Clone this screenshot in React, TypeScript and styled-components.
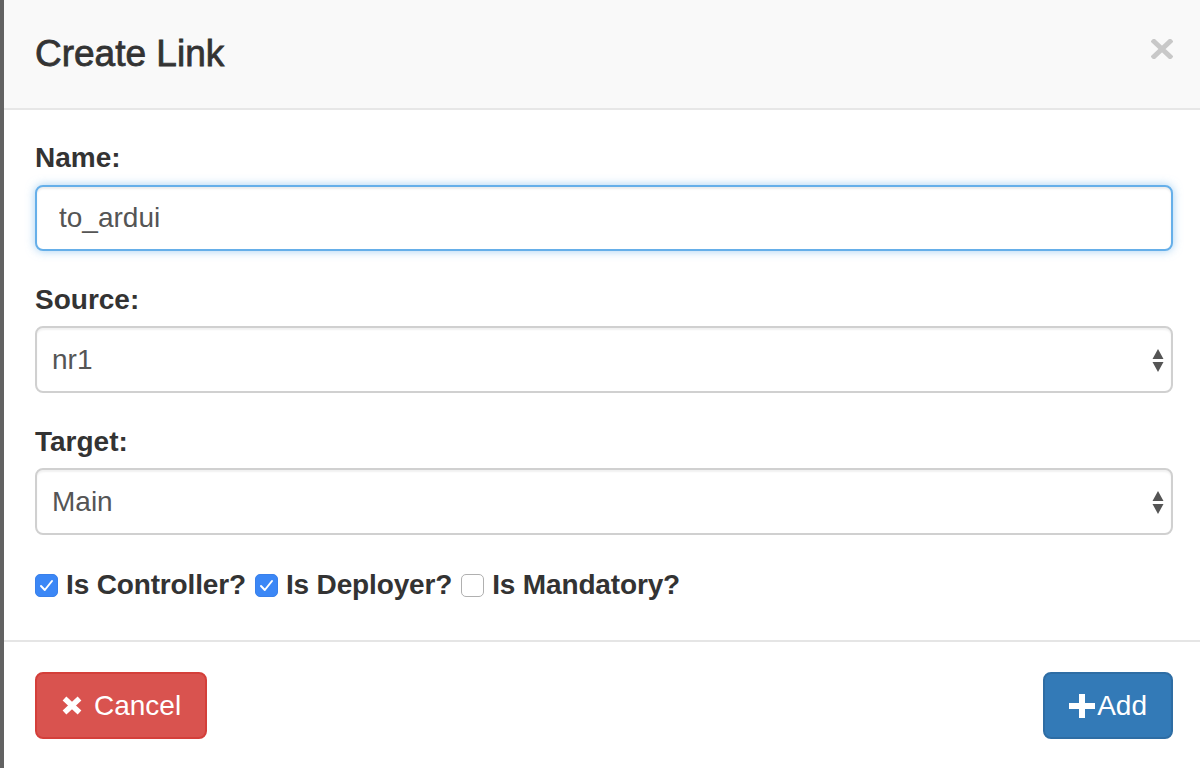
import React from "react";
import styled, { createGlobalStyle } from "styled-components";

const Global = createGlobalStyle`
  html, body { margin: 0; padding: 0; overflow: hidden; }
  body {
    background: #626262;
    font-family: "Liberation Sans", Arial, Helvetica, sans-serif;
    color: #333;
  }
  * { box-sizing: border-box; }
`;

const Modal = styled.div`
  margin-left: 4px;
  width: 1200px;
  height: 768px;
  background: #fff;
  display: flex;
  flex-direction: column;
`;

const Header = styled.div`
  height: 110px;
  padding: 28px 31px 0 31px;
  background: #f9f9f9;
  border-bottom: 2px solid #e7e7e7;
  display: flex;
  justify-content: space-between;
  align-items: flex-start;
`;

const Title = styled.h4`
  margin: 0;
  font-size: 37px;
  line-height: 51px;
  font-weight: 400;
  color: #333;
  -webkit-text-stroke: 0.8px #333;
`;

const CloseButton = styled.button`
  border: 0;
  background: transparent;
  padding: 0;
  margin-top: 11px;
  width: 22px;
  height: 20px;
  display: flex;
  cursor: pointer;
`;

const Body = styled.div`
  padding: 28px 31px 35px 31px;
  border-bottom: 2px solid #e5e5e5;
`;

const FormGroup = styled.div<{ $mb?: number }>`
  margin-bottom: ${(p) => (p.$mb ?? 29)}px;
  display: flex;
  flex-direction: column;
`;

const Label = styled.label<{ $mb?: number }>`
  display: block;
  font-size: 28px;
  line-height: 40px;
  font-weight: 700;
  color: #333;
  margin-bottom: ${(p) => (p.$mb ?? 6)}px;
`;

const TextInput = styled.input`
  height: 66px;
  width: 100%;
  padding: 0 22px;
  font-family: inherit;
  font-size: 28px;
  color: #555;
  background: #fff;
  border: 2px solid #66afe9;
  border-radius: 8px;
  outline: none;
  box-shadow: inset 0 2px 2px rgba(0, 0, 0, 0.075), 0 0 10px rgba(102, 175, 233, 0.6);
`;

const SelectWrap = styled.div`
  position: relative;
  width: 100%;
`;

const Select = styled.select`
  appearance: none;
  -webkit-appearance: none;
  height: 67px;
  width: 100%;
  padding: 0 40px 0 15px;
  font-family: inherit;
  font-size: 28px;
  color: #555;
  background: #fff;
  border: 2px solid #d0d0d0;
  border-radius: 8px;
  outline: none;
  box-shadow: inset 0 2px 2px rgba(0, 0, 0, 0.06);
`;

const Arrows = styled.svg`
  position: absolute;
  right: 9px;
  top: 50%;
  margin-top: -12px;
  width: 12px;
  height: 24px;
  pointer-events: none;
`;

const CheckRow = styled.div`
  display: flex;
  align-items: center;
  height: 40px;
  gap: 9px;
`;

const CheckLabel = styled.label`
  display: flex;
  align-items: center;
  gap: 8px;
  font-size: 28px;
  line-height: 40px;
  font-weight: 700;
  letter-spacing: -0.15px;
  color: #333;
`;

const Box = styled.span<{ $checked: boolean }>`
  width: 23px;
  height: 23px;
  border-radius: 5px;
  display: inline-flex;
  align-items: center;
  justify-content: center;
  background: ${(p) => (p.$checked ? "#3b87f6" : "#fff")};
  border: ${(p) => (p.$checked ? "1px solid #3a80ea" : "1.5px solid #b0b0b0")};
`;

const Footer = styled.div`
  padding: 30px 31px 0 31px;
  display: flex;
  justify-content: space-between;
  align-items: flex-start;
`;

const Button = styled.button<{ $variant: "danger" | "primary" }>`
  height: 67px;
  padding: 0 24px;
  border-radius: 8px;
  border: 2px solid ${(p) => (p.$variant === "danger" ? "#d43f3a" : "#2e6da4")};
  background: ${(p) => (p.$variant === "danger" ? "#d9534f" : "#337ab7")};
  color: #fff;
  font-family: inherit;
  font-size: 28px;
  display: inline-flex;
  align-items: center;
  gap: ${(p) => (p.$variant === "danger" ? 11 : 2)}px;
  cursor: pointer;
`;

const Check = () => (
  <svg width="15" height="13" viewBox="0 0 15 13">
    <path d="M2 7 L5.8 11 L13 2" fill="none" stroke="#fff" strokeWidth="2" strokeLinecap="round" strokeLinejoin="round" />
  </svg>
);

const CheckItem = ({ checked, text }: { checked: boolean; text: string }) => (
  <CheckLabel>
    <Box $checked={checked}>{checked && <Check />}</Box>
    {text}
  </CheckLabel>
);

const SelectArrows = () => (
  <Arrows viewBox="0 0 12 24">
    <path d="M0.5 11 L6 1 L11.5 11 Z M0.5 14 L11.5 14 L6 24 Z" fill="#555" />
  </Arrows>
);

export default function App() {
  return (
    <>
      <Global />
      <Modal>
        <Header>
          <Title>Create Link</Title>
          <CloseButton aria-label="Close">
            <svg width="22" height="20" viewBox="0 0 22 20">
              <path d="M3 2.5 L19 17.5 M19 2.5 L3 17.5" stroke="#c8c8c8" strokeWidth="5" strokeLinecap="square" />
            </svg>
          </CloseButton>
        </Header>
        <Body>
          <FormGroup>
            <Label $mb={7}>Name:</Label>
            <TextInput defaultValue="to_ardui" />
          </FormGroup>
          <FormGroup>
            <Label>Source:</Label>
            <SelectWrap>
              <Select defaultValue="nr1">
                <option>nr1</option>
              </Select>
              <SelectArrows />
            </SelectWrap>
          </FormGroup>
          <FormGroup $mb={30}>
            <Label>Target:</Label>
            <SelectWrap>
              <Select defaultValue="Main">
                <option>Main</option>
              </Select>
              <SelectArrows />
            </SelectWrap>
          </FormGroup>
          <CheckRow>
            <CheckItem checked text="Is Controller?" />
            <CheckItem checked text="Is Deployer?" />
            <CheckItem checked={false} text="Is Mandatory?" />
          </CheckRow>
        </Body>
        <Footer>
          <Button $variant="danger">
            <svg width="22" height="19" viewBox="0 0 22 19">
              <path d="M3.5 2.5 L18.5 16.5 M18.5 2.5 L3.5 16.5" stroke="#fff" strokeWidth="5.5" strokeLinecap="butt" />
            </svg>
            Cancel
          </Button>
          <Button $variant="primary">
            <svg width="26" height="24" viewBox="0 0 26 24">
              <path d="M10 0 H16 V9 H26 V15 H16 V24 H10 V15 H0 V9 H10 Z" fill="#fff" />
            </svg>
            Add
          </Button>
        </Footer>
      </Modal>
    </>
  );
}
